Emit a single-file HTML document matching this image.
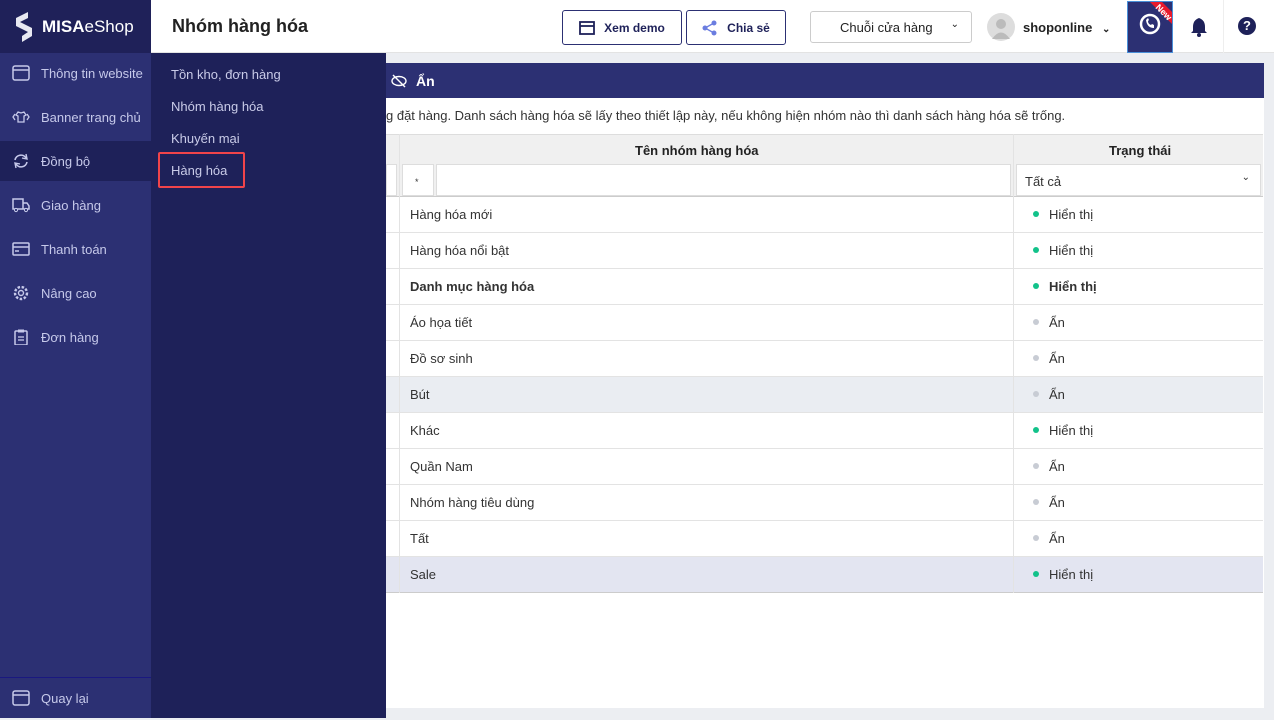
<!DOCTYPE html>
<html><head><meta charset="utf-8"><style>
*{box-sizing:border-box;margin:0;padding:0}
body{width:1274px;height:718px;overflow:hidden;font-family:"Liberation Sans",sans-serif;background:#eceef2;position:relative;font-size:13px;color:#333}
.abs{position:absolute}
.top{left:0;top:0;width:1274px;height:53px;background:#fff;border-bottom:1px solid #e3e3e3}
.logo{left:0;top:0;width:151px;height:53px;background:#1f2159;color:#fff;font-size:17px;display:flex;align-items:center;padding-left:14px}
.side{left:0;top:53px;width:151px;height:665px;background:#2c3073}
.sitem{position:absolute;left:0;width:151px;height:44px;display:flex;align-items:center;padding-left:12px;color:#c6c9ea;font-size:13px}
.sitem svg{margin-right:11px;flex:none}
.sub{left:151px;top:53px;width:235px;height:665px;background:#1e2159}
.subi{position:absolute;left:20px;color:#c9cbe8;font-size:13px}
.btn{top:10px;height:35px;border:1px solid #2c3073;border-radius:3px;display:flex;align-items:center;justify-content:center;font-size:12px;color:#1e2159;font-weight:bold}
.panel{left:386px;top:63px;width:878px;height:645px;background:#fff}
.row{position:absolute;left:386px;width:877px;height:36px;border-bottom:1px solid #e3e3e3}
.c1{position:absolute;left:24px;top:10px}
.c2{position:absolute;left:647px;top:10px}
.dot{display:inline-block;width:6px;height:6px;border-radius:3px;background:#12c28a;margin-right:10px;vertical-align:2px}
.g{background:#c8ccd4}
</style></head><body>
<div class="abs top"></div>
<div class="abs logo"><svg width="24" height="30" viewBox="0 0 24 30"><path d="M2 6 L14 0 L14 6 L6 10 L18 16 L18 24 L8 30 L8 24 L14 20 L2 14Z" fill="#e8e9f2"/></svg><b style="margin-left:4px">MISA</b><span>eShop</span></div>
<div class="abs" style="left:172px;top:16px;font-size:18px;font-weight:bold;color:#222">Nhóm hàng hóa</div>
<div class="abs btn" style="left:562px;width:120px"><svg width="16" height="14" style="margin-right:9px"><rect x="1" y="1" width="14" height="12" fill="none" stroke="#1e2159" stroke-width="1.8"/><line x1="1" y1="5" x2="15" y2="5" stroke="#1e2159" stroke-width="1.8"/></svg>Xem demo</div>
<div class="abs btn" style="left:686px;width:100px"><svg width="16" height="16" style="margin-right:9px"><circle cx="12" cy="3" r="2.5" fill="#6b7de0"/><circle cx="3" cy="8" r="2.5" fill="#6b7de0"/><circle cx="12" cy="13" r="2.5" fill="#6b7de0"/><path d="M12 3L3 8L12 13" stroke="#6b7de0" fill="none" stroke-width="1.3"/></svg>Chia sẻ</div>
<div class="abs" style="left:810px;top:11px;width:162px;height:32px;border:1px solid #ccc;border-radius:3px;font-size:13px;color:#222;padding:8px 0 0 29px">Chuỗi cửa hàng<span style="position:absolute;right:12px;top:7px;font-size:10px">&#8964;</span></div>
<div class="abs" style="left:987px;top:13px;width:28px;height:28px;border-radius:14px;background:#ddd"><svg width="28" height="28"><circle cx="14" cy="11" r="5" fill="#bbb"/><path d="M5 26 Q14 13 23 26Z" fill="#bbb"/></svg></div>
<div class="abs" style="left:1023px;top:20px;font-weight:bold;color:#222;font-size:13px">shoponline <span style="font-size:10px;margin-left:6px">&#8964;</span></div>
<div class="abs" style="left:1127px;top:1px;width:46px;height:52px;background:#2c3073;border:1px solid #4a90d9;overflow:hidden"><svg width="46" height="52"><circle cx="22" cy="22" r="9" fill="none" stroke="#fff" stroke-width="2.5"/><path d="M18 18 Q19 26 26 26 L26 23 L24 22 L23 23 Q20 22 20 19 L21 18 L20 16Z" fill="#fff"/><polygon points="22,0 34,0 46,12 46,24" fill="#e8192c"/><text x="35" y="13" fill="#fff" font-size="9" font-weight="bold" transform="rotate(45 35 11)" text-anchor="middle" font-family="Liberation Sans">New</text></svg></div>
<div class="abs" style="left:1190px;top:17px"><svg width="18" height="20"><path d="M9 1 Q3 3 3 10 L3 14 L1 16 L17 16 L15 14 L15 10 Q15 3 9 1Z" fill="#1e2159"/><circle cx="9" cy="18" r="2" fill="#1e2159"/></svg></div>
<div class="abs" style="left:1223px;top:0;width:1px;height:53px;background:#eee"></div>
<div class="abs" style="left:1238px;top:17px;width:18px;height:18px;border-radius:9px;background:#1e2159;color:#fff;font-size:13px;font-weight:bold;text-align:center;line-height:18px">?</div>

<div class="abs panel"></div>
<div class="abs" style="left:386px;top:63px;width:878px;height:35px;background:#2c3073;color:#fff;font-size:14px;font-weight:bold;padding:10px 0 0 30px"><svg width="16" height="14" style="position:absolute;left:5px;top:11px"><ellipse cx="8" cy="7" rx="7" ry="4.5" fill="none" stroke="#fff" stroke-width="1.4"/><line x1="2" y1="1" x2="14" y2="13" stroke="#fff" stroke-width="1.4"/></svg>Ẩn</div>
<div class="abs" style="left:386px;top:108px;font-size:13px;color:#333">g đặt hàng. Danh sách hàng hóa sẽ lấy theo thiết lập này, nếu không hiện nhóm nào thì danh sách hàng hóa sẽ trống.</div>
<div class="abs" style="left:386px;top:134px;width:877px;height:63px;background:#f0f0f0;border-top:1px solid #ddd;border-bottom:1px solid #ccc"></div>
<div class="abs" style="left:399px;top:134px;width:1px;height:459px;background:#e3e3e3"></div>
<div class="abs" style="left:1013px;top:134px;width:1px;height:459px;background:#e3e3e3"></div>
<div class="abs" style="left:635px;top:143px;font-weight:bold;color:#222">Tên nhóm hàng hóa</div>
<div class="abs" style="left:1109px;top:143px;font-weight:bold;color:#222">Trạng thái</div>
<div class="abs" style="left:386px;top:164px;width:11px;height:32px;background:#fff;border:1px solid #ddd"></div>
<div class="abs" style="left:402px;top:164px;width:32px;height:32px;background:#fff;border:1px solid #ddd;font-size:9px;padding:12px 0 0 12px">*</div>
<div class="abs" style="left:436px;top:164px;width:575px;height:32px;background:#fff;border:1px solid #ddd"></div>
<div class="abs" style="left:1016px;top:164px;width:245px;height:32px;background:#fff;border:1px solid #ddd;padding:9px 0 0 8px">Tất cả<span style="position:absolute;right:10px;top:7px;font-size:10px">&#8964;</span></div>

<div class="row" style="top:197px"><span class="c1">Hàng hóa mới</span><span class="c2"><i class="dot"></i>Hiển thị</span></div>
<div class="row" style="top:233px"><span class="c1">Hàng hóa nổi bật</span><span class="c2"><i class="dot"></i>Hiển thị</span></div>
<div class="row" style="top:269px;font-weight:bold"><span class="c1">Danh mục hàng hóa</span><span class="c2"><i class="dot"></i>Hiển thị</span></div>
<div class="row" style="top:305px"><span class="c1">Áo họa tiết</span><span class="c2"><i class="dot g"></i>Ẩn</span></div>
<div class="row" style="top:341px"><span class="c1">Đồ sơ sinh</span><span class="c2"><i class="dot g"></i>Ẩn</span></div>
<div class="row" style="top:377px;background:#eaedf2"><span class="c1">Bút</span><span class="c2"><i class="dot g"></i>Ẩn</span></div>
<div class="row" style="top:413px"><span class="c1">Khác</span><span class="c2"><i class="dot"></i>Hiển thị</span></div>
<div class="row" style="top:449px"><span class="c1">Quần Nam</span><span class="c2"><i class="dot g"></i>Ẩn</span></div>
<div class="row" style="top:485px"><span class="c1">Nhóm hàng tiêu dùng</span><span class="c2"><i class="dot g"></i>Ẩn</span></div>
<div class="row" style="top:521px"><span class="c1">Tất</span><span class="c2"><i class="dot g"></i>Ẩn</span></div>
<div class="row" style="top:557px;background:#e3e5f1;border-bottom-color:#ccc"><span class="c1">Sale</span><span class="c2"><i class="dot"></i>Hiển thị</span></div>
<div class="abs" style="left:399px;top:377px;width:1px;height:216px;background:#e3e3e3"></div>
<div class="abs" style="left:1013px;top:377px;width:1px;height:216px;background:#e3e3e3"></div>

<div class="abs side"></div>
<div class="abs" style="left:0;top:141px;width:151px;height:40px;background:#1e2159"></div>
<div class="sitem" style="top:51px"><svg width="18" height="16"><rect x="1" y="1" width="16" height="14" rx="2" fill="none" stroke="#c6c9ea" stroke-width="1.5"/><line x1="1" y1="5" x2="17" y2="5" stroke="#c6c9ea" stroke-width="1.5"/></svg>Thông tin website</div>
<div class="sitem" style="top:95px"><svg width="18" height="14"><path d="M3 4L1 7L3 10M15 4L17 7L15 10M6 2L9 3L12 2L14 5L12 6L12 12L6 12L6 6L4 5Z" fill="none" stroke="#c6c9ea" stroke-width="1.3"/></svg>Banner trang chủ</div>
<div class="sitem" style="top:139px"><svg width="18" height="16"><path d="M3 7A6 6 0 0 1 14 5M15 9A6 6 0 0 1 4 11" fill="none" stroke="#c6c9ea" stroke-width="1.6"/><path d="M14 1L15 6L10 5M4 15L3 10L8 11" fill="none" stroke="#c6c9ea" stroke-width="1.4"/></svg>Đồng bộ</div>
<div class="sitem" style="top:183px"><svg width="18" height="16"><path d="M1 2H11V12H1ZM11 6H15L17 9V12H11" fill="none" stroke="#c6c9ea" stroke-width="1.5"/><circle cx="4" cy="13" r="1.6" fill="#2c3073" stroke="#c6c9ea"/><circle cx="14" cy="13" r="1.6" fill="#2c3073" stroke="#c6c9ea"/></svg>Giao hàng</div>
<div class="sitem" style="top:227px"><svg width="18" height="14"><rect x="1" y="1" width="16" height="12" rx="1" fill="none" stroke="#c6c9ea" stroke-width="1.5"/><line x1="1" y1="5" x2="17" y2="5" stroke="#c6c9ea" stroke-width="1.5"/><line x1="3" y1="9" x2="7" y2="9" stroke="#c6c9ea" stroke-width="1.5"/></svg>Thanh toán</div>
<div class="sitem" style="top:271px"><svg width="18" height="18"><circle cx="9" cy="9" r="6" fill="none" stroke="#c6c9ea" stroke-width="2.4" stroke-dasharray="2.5 1.6"/><circle cx="9" cy="9" r="2.5" fill="none" stroke="#c6c9ea" stroke-width="1.4"/></svg>Nâng cao</div>
<div class="sitem" style="top:315px"><svg width="18" height="16"><rect x="3" y="2" width="12" height="14" rx="1" fill="none" stroke="#c6c9ea" stroke-width="1.5"/><rect x="6" y="0.5" width="6" height="3" fill="#c6c9ea"/><line x1="6" y1="8" x2="12" y2="8" stroke="#c6c9ea" stroke-width="1.3"/><line x1="6" y1="11" x2="12" y2="11" stroke="#c6c9ea" stroke-width="1.3"/></svg>Đơn hàng</div>
<div class="abs" style="left:0;top:677px;width:151px;height:1px;background:#1a1880"></div>
<div class="sitem" style="top:676px"><svg width="18" height="16"><rect x="1" y="1" width="16" height="14" rx="2" fill="none" stroke="#c6c9ea" stroke-width="1.5"/><line x1="1" y1="5" x2="17" y2="5" stroke="#c6c9ea" stroke-width="1.5"/></svg>Quay lại</div>

<div class="abs sub"></div>
<div class="subi abs" style="left:171px;top:67px">Tồn kho, đơn hàng</div>
<div class="subi abs" style="left:171px;top:99px">Nhóm hàng hóa</div>
<div class="subi abs" style="left:171px;top:131px">Khuyến mại</div>
<div class="abs" style="left:158px;top:152px;width:87px;height:36px;border:2px solid #f0444a;border-radius:2px"></div>
<div class="subi abs" style="left:171px;top:163px">Hàng hóa</div>
</body></html>
